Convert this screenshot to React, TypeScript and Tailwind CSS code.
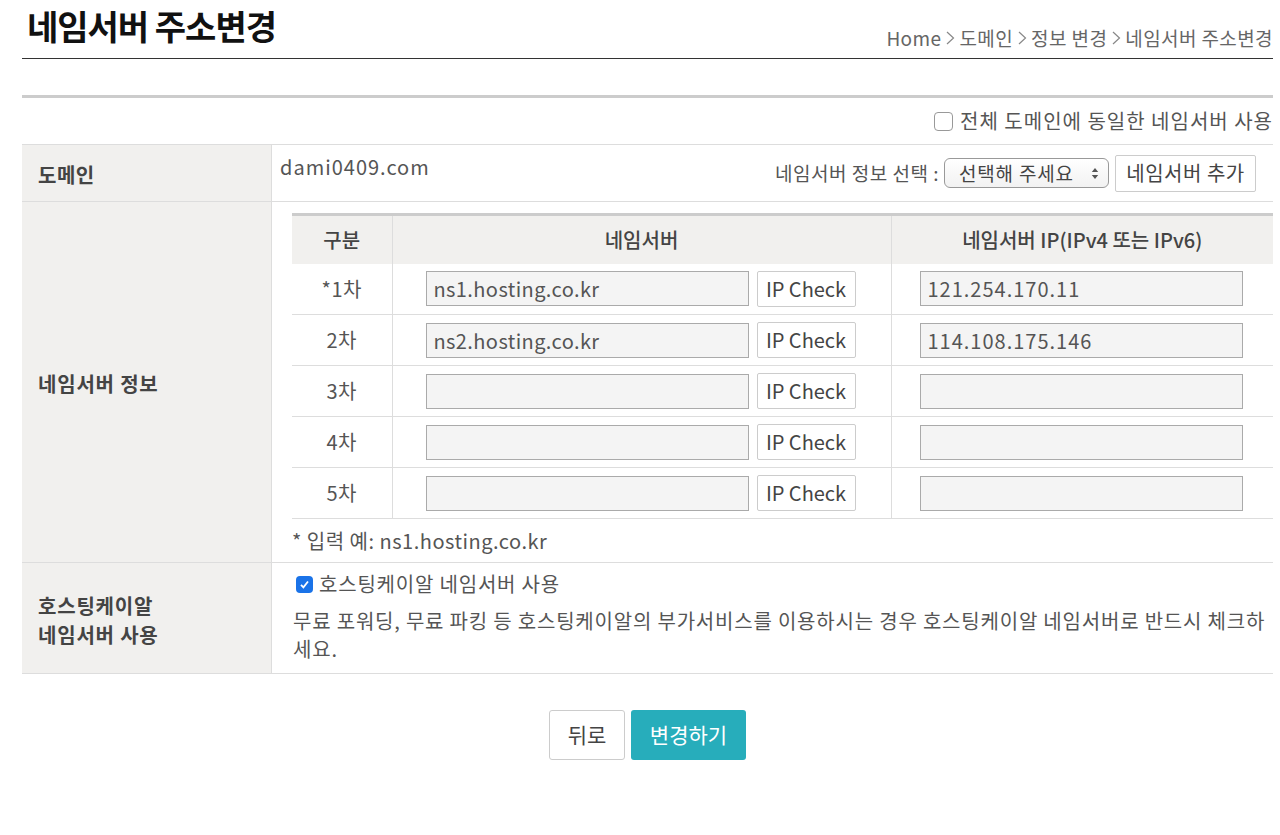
import { useState } from "react";

const rows = [
    { label: "*1차", ns: "ns1.hosting.co.kr", ip: "121.254.170.11" },
    { label: "2차", ns: "ns2.hosting.co.kr", ip: "114.108.175.146" },
    { label: "3차", ns: "", ip: "" },
    { label: "4차", ns: "", ip: "" },
    { label: "5차", ns: "", ip: "" },
];

const Chevron = () => (
    <svg width="10" height="16" viewBox="0 0 10 16" className="mx-[4px] inline-block">
        <path d="M2 2 L8.5 8 L2 14" fill="none" stroke="#888" strokeWidth="1.2" />
    </svg>
);

const App = () => {
    const [sameAll, setSameAll] = useState(false);
    const [useHosting, setUseHosting] = useState(true);

    return (
        <div className="min-h-screen bg-white font-['Noto_Sans_CJK_KR','Noto_Sans',sans-serif] text-[#555]">
            <div className="ml-[22px] w-[1251px]">
                {/* Header */}
                <div className="flex h-[59px] items-end justify-between border-b-[1.5px] border-[#333]">
                    <h1 className="mb-[15px] ml-[5px] text-[34px] font-bold leading-none tracking-[-1px] text-[#111]">
                        네임서버 주소변경
                    </h1>
                    <div className="mb-[6px] flex items-center text-[19px] tracking-[0.4px] text-[#666]">
                        Home<Chevron />도메인<Chevron />정보 변경<Chevron />네임서버 주소변경
                    </div>
                </div>

                {/* Form table */}
                <div className="mt-[36px] border-t-[3px] border-[#ccc]">
                    <div className="flex h-[47px] items-center justify-end border-b border-[#ddd] text-[20px] tracking-[1px]">
                        <label className="flex cursor-pointer items-center gap-[7px]" onClick={() => setSameAll(!sameAll)}>
                            <span className={`h-[19px] w-[19px] rounded-[4px] border ${sameAll ? "border-[#1a73e8] bg-[#1a73e8]" : "border-[#999] bg-white"}`} />
                            전체 도메인에 동일한 네임서버 사용
                        </label>
                    </div>

                    {/* 도메인 */}
                    <div className="flex h-[57px] border-b border-[#ddd]">
                        <div className="flex w-[250px] items-center border-r border-[#ddd] bg-[#f1f0ee] pl-[16px] pt-[4px] text-[20px] font-bold tracking-[0.5px] text-[#444]">
                            도메인
                        </div>
                        <div className="flex flex-1 items-start justify-between pl-[8px]">
                            <div className="pt-[7px] text-[20px] tracking-[1px] text-[#555]">dami0409.com</div>
                            <div className="flex items-center self-center pr-[17px]">
                                <span className="mr-[5px] text-[19px] tracking-[0.5px] text-[#555]">네임서버 정보 선택 :</span>
                                <div className="flex h-[30px] w-[165px] items-center justify-between rounded-[6px] border border-[#999] bg-gradient-to-b from-white to-[#f2f2f2] pl-[14px] pr-[9px] text-[19px] tracking-[0.8px] text-[#444]">
                                    선택해 주세요
                                    <svg width="8" height="13" viewBox="0 0 8 13">
                                        <path d="M4 1 L7.2 5 H0.8 Z M4 12 L7.2 8 H0.8 Z" fill="#555" />
                                    </svg>
                                </div>
                                <button className="ml-[6px] h-[37px] w-[141px] rounded-[2px] border border-[#ccc] bg-white text-[20px] tracking-[0.5px] text-[#444]">
                                    네임서버 추가
                                </button>
                            </div>
                        </div>
                    </div>

                    {/* 네임서버 정보 */}
                    <div className="flex border-b border-[#ddd]">
                        <div className="flex w-[250px] items-center border-r border-[#ddd] bg-[#f1f0ee] pl-[16px] pt-[4px] text-[20px] font-bold tracking-[0.8px] text-[#444]">
                            네임서버 정보
                        </div>
                        <div className="flex-1 pl-[20px] pt-[11px] text-[20px]">
                            <table className="w-full border-collapse">
                                <thead>
                                    <tr className="h-[49px] border-t-[3px] border-[#ccc] bg-[#f1f0ee] text-[#444]">
                                        <th className="w-[100px] border-r border-[#ddd] font-medium">구분</th>
                                        <th className="w-[499px] border-r border-[#ddd] font-medium">네임서버</th>
                                        <th className="font-medium">네임서버 IP(IPv4 또는 IPv6)</th>
                                    </tr>
                                </thead>
                                <tbody>
                                    {rows.map((r) => (
                                        <tr key={r.label} className="h-[51px] border-b border-[#ddd]">
                                            <td className="border-r border-[#ddd] text-center tracking-[0.5px]">{r.label}</td>
                                            <td className="border-r border-[#ddd] pl-[33px]">
                                                <div className="flex items-center gap-[8px]">
                                                    <input
                                                        defaultValue={r.ns}
                                                        className="h-[35px] w-[323px] border border-[#aaa] bg-[#f4f4f4] px-[7px] text-[20px] tracking-[0.4px] text-[#555] outline-none"
                                                    />
                                                    <button className="h-[36px] w-[99px] rounded-[2px] border border-[#ccc] bg-white text-[20px] text-[#444]">
                                                        IP Check
                                                    </button>
                                                </div>
                                            </td>
                                            <td className="pl-[28px]">
                                                <input
                                                    defaultValue={r.ip}
                                                    className="h-[35px] w-[323px] border border-[#aaa] bg-[#f4f4f4] px-[7px] text-[20px] tracking-[1px] text-[#555] outline-none"
                                                />
                                            </td>
                                        </tr>
                                    ))}
                                </tbody>
                            </table>
                            <div className="flex h-[43px] items-center tracking-[0.5px]">* 입력 예: ns1.hosting.co.kr</div>
                        </div>
                    </div>

                    {/* 호스팅케이알 네임서버 사용 */}
                    <div className="flex h-[111px] border-b border-[#ddd]">
                        <div className="flex w-[250px] items-center border-r border-[#ddd] bg-[#f1f0ee] pl-[16px] pt-[4px] text-[20px] font-bold leading-[29px] tracking-[0.8px] text-[#444]">
                            호스팅케이알
                            <br />
                            네임서버 사용
                        </div>
                        <div className="flex-1 pl-[21px] pt-[7px] text-[20px] leading-[28px] tracking-[0.8px]">
                            <label className="flex cursor-pointer items-center gap-[6px]" onClick={() => setUseHosting(!useHosting)}>
                                <span
                                    className={`ml-[3px] flex h-[17px] w-[17px] items-center justify-center rounded-[4px] ${useHosting ? "bg-[#1a73e8]" : "border border-[#999] bg-white"}`}
                                >
                                    {useHosting && (
                                        <svg width="11" height="11" viewBox="0 0 11 11">
                                            <path d="M2 5.8 L4.4 8.3 L9 2.5" fill="none" stroke="white" strokeWidth="1.8" />
                                        </svg>
                                    )}
                                </span>
                                호스팅케이알 네임서버 사용
                            </label>
                            <p className="mt-[9px]">
                                무료 포워딩, 무료 파킹 등 호스팅케이알의 부가서비스를 이용하시는 경우 호스팅케이알 네임서버로 반드시 체크하세요.
                            </p>
                        </div>
                    </div>
                </div>

                {/* Buttons */}
                <div className="mt-[36px] flex justify-center gap-[6px]">
                    <button className="h-[50px] w-[76px] rounded-[3px] border border-[#ccc] bg-white text-[21px] text-[#444]">
                        뒤로
                    </button>
                    <button className="h-[50px] w-[115px] rounded-[3px] bg-[#27adbb] text-[21px] text-white">
                        변경하기
                    </button>
                </div>
            </div>
        </div>
    );
};

export default App;
